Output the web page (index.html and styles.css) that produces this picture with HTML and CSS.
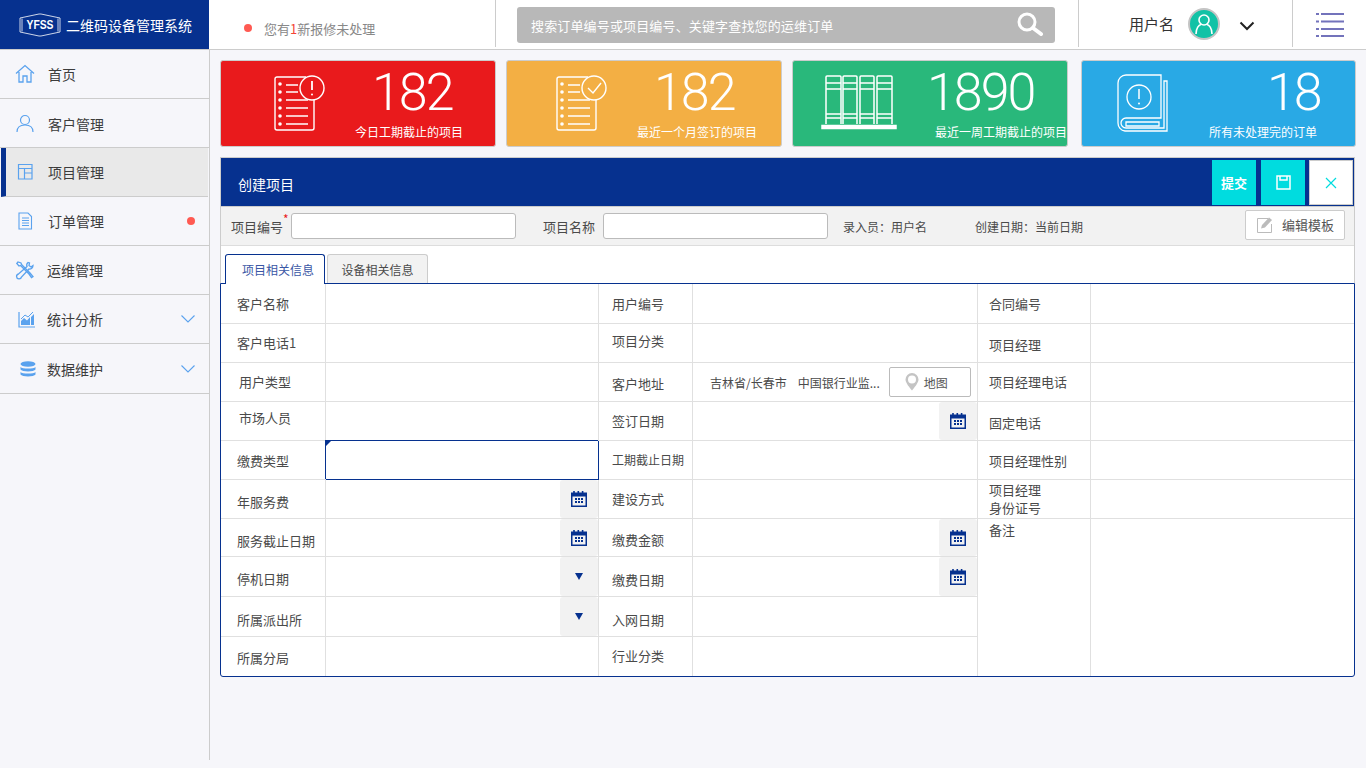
FILE: index.html
```html
<!DOCTYPE html>
<html lang="zh-CN">
<head>
    <meta charset="UTF-8">
    <title>二维码设备管理系统</title>
    <link rel="stylesheet" href="styles.css">
</head>
<body>
    <svg class="defs" width="0" height="0">
        <symbol id="cal" viewBox="0 0 16 16">
            <path fill="#06318f" fill-rule="evenodd" d="M0 1.500h2.200V0h1.600v1.500h2.700V0h1.600v1.500h2.700V0h1.600v1.500H16V16H0zM1.500 5.500v9h13v-9z"/>
            <path fill="#06318f" d="M4 7h2v2H4zM7 7h2v2H7zM10 7h2v2h-2zM4 10h2v2H4zM7 10h2v2H7zM10 10h2v2h-2z"/>
        </symbol>
    </svg>

    <header class="topbar">
        <div class="brand">
            <svg class="brand-logo" width="42" height="24" viewBox="0 0 42 24">
                <path fill="none" stroke="#fff" stroke-width=".8" d="M1 5 20 1 22 1 41 5V19L22 23H20L1 19Z"/>
                <path fill="none" stroke="#fff" stroke-width=".8" d="M3 5.500V18.500M39 5.500V18.500"/>
                <text x="21" y="16" text-anchor="middle" font-family="Liberation Sans" font-weight="bold" font-size="12" textLength="27" lengthAdjust="spacingAndGlyphs" fill="#fff">YFSS</text>
            </svg>
            <span>二维码设备管理系统</span>
        </div>
        <div class="notice"><i class="dot"></i><span>您有<b>1</b>新报修未处理</span></div>
        <div class="search-wrap">
            <div class="search">
                <span>搜索订单编号或项目编号、关键字查找您的运维订单</span>
                <svg width="28" height="24" viewBox="0 0 28 24"><circle cx="11" cy="10" r="8" fill="none" stroke="#fff" stroke-width="3"/><path d="M17 16l8 6" stroke="#fff" stroke-width="4" stroke-linecap="round"/></svg>
            </div>
        </div>
        <div class="user">
            <span>用户名</span>
            <svg class="avatar" width="32" height="32" viewBox="0 0 32 32">
                <circle cx="16" cy="16" r="15" fill="#12c2a6" stroke="#c4c4c4" stroke-width="2"/>
                <circle cx="16" cy="12" r="5" fill="none" stroke="#fff" stroke-width="1.600"/>
                <path d="M8 26c0-6 3-9 5-9.500M24 26c0-6-3-9-5-9.500" fill="none" stroke="#fff" stroke-width="1.600"/>
            </svg>
            <svg class="caret" width="16" height="10" viewBox="0 0 16 10"><path d="M1.500 1.500 8 8l6.500-6.500" fill="none" stroke="#222" stroke-width="2"/></svg>
        </div>
        <div class="menu-btn">
            <svg width="28" height="24" viewBox="0 0 28 24">
                <path stroke="#7373bb" stroke-width="2" d="M0 1h3M5 1h23M0 8.500h3M5 8.500h23M0 16h3M5 16h23M0 23h3M5 23h23"/>
            </svg>
        </div>
    </header>

    <div class="layout">
        <nav class="sidebar">
            <a class="nav-item">
                <svg width="20" height="20" viewBox="0 0 20 20"><path d="M1 9.500 10 1.500l9 8M4 8v10h4v-6h4v6h4V8" fill="none" stroke="#5aa2ee" stroke-width="1.300"/></svg>
                <span>首页</span>
            </a>
            <a class="nav-item low">
                <svg width="20" height="20" viewBox="0 0 20 20"><circle cx="10" cy="6" r="4.500" fill="none" stroke="#5aa2ee" stroke-width="1.200"/><path d="M2 18c0-4.500 3-7 8-7s8 2.500 8 7" fill="none" stroke="#5aa2ee" stroke-width="1.200"/></svg>
                <span>客户管理</span>
            </a>
            <a class="nav-item active">
                <svg width="20" height="20" viewBox="0 0 20 20"><path d="M3.500 2.500h13.500v14.500H3.500zM3.500 6.500h13.500M9.500 6.500V17M9.500 11h7.500" fill="none" stroke="#5aa2ee" stroke-width="1.200"/></svg>
                <span>项目管理</span>
            </a>
            <a class="nav-item">
                <svg width="20" height="20" viewBox="0 0 20 20"><path d="M4 2h9l3.500 3.500V18H4zM7 7h7M7 9.500h7M7 12h7M7 14.500h7" fill="none" stroke="#5aa2ee" stroke-width="1.100"/></svg>
                <span>订单管理</span>
                <i class="dot nav-dot"></i>
            </a>
            <a class="nav-item shift">
                <svg width="20" height="20" viewBox="0 0 20 20" fill="none" stroke="#5aa2ee" stroke-width="1.300">
                    <path d="M3 2 1.800 3.500 4 6l1.500-.5L14 14l2.500 3.500 1.500-1-3-3.500-8.500-8.500L6 3z"/>
                    <path d="M13 2.500a3.500 3.500 0 0 0-1 4L3.500 14a2.500 2.500 0 1 0 3 3l7.500-8a3.500 3.500 0 0 0 4-3.500l-2 1.500-2-1.500.5-2.500z"/>
                </svg>
                <span>运维管理</span>
            </a>
            <a class="nav-item shift">
                <svg width="20" height="20" viewBox="-2 0 20 20" overflow="visible"><path d="M2 3v15h16" fill="none" stroke="#5aa2ee" stroke-width="1.200"/><path d="M4 16v-4l3-3 3 2.500 3-3.500v8zM14 16V8l3-3v11z" fill="#5aa2ee"/><path d="M4 10l4-4 3 2 5-5" fill="none" stroke="#5aa2ee"/></svg>
                <span>统计分析</span>
                <svg class="nav-arrow" width="14" height="8" viewBox="0 0 14 8"><path d="M.5.500 7 7 13.500.500" fill="none" stroke="#5aa2ee" stroke-width="1.100"/></svg>
            </a>
            <a class="nav-item shift last">
                <svg width="20" height="20" viewBox="-2 0 20 20" overflow="visible"><ellipse cx="11" cy="5" rx="7.500" ry="2.800" fill="#5aa2ee"/><path d="M3.500 8c1.500 2 13.500 2 15 0v2.500c-1.500 2.500-13.500 2.500-15 0zM3.500 13c1.500 2 13.500 2 15 0v2.500c-1.500 2.500-13.500 2.500-15 0z" fill="#5aa2ee"/></svg>
                <span>数据维护</span>
                <svg class="nav-arrow" width="14" height="8" viewBox="0 0 14 8"><path d="M.5.500 7 7 13.500.500" fill="none" stroke="#5aa2ee" stroke-width="1.100"/></svg>
            </a>
        </nav>

        <main class="content">
            <section class="cards">
                <div class="card red">
                    <svg class="card-icon" width="52" height="58" viewBox="0 0 52 58" fill="none" stroke="#fff" stroke-width="1.400">
                        <path d="M32 3H3a2 2 0 0 0-2 2v49a2 2 0 0 0 2 2h35a2 2 0 0 0 2-2V26"/>
                        <circle cx="38" cy="14" r="12"/>
                        <path d="M38 7v9" stroke-width="1.800"/><circle cx="38" cy="20.500" r="1" fill="#fff" stroke="none"/>
                        <path d="M12 11h12M12 18h12M12 26h22M12 34h22M12 42h22M12 50h22"/>
                        <g fill="#fff" stroke="none"><circle cx="6" cy="10" r="1.800"/><circle cx="6" cy="18" r="1.800"/><circle cx="6" cy="26" r="1.800"/><circle cx="6" cy="34" r="1.800"/><circle cx="6" cy="42" r="1.800"/><circle cx="6" cy="50" r="1.800"/></g>
                    </svg>
                    <div class="stat">
                        <div class="num">182</div>
                        <div class="lab">今日工期截止的项目</div>
                    </div>
                </div>
                <div class="card orange">
                    <svg class="card-icon" width="52" height="58" viewBox="0 0 52 58" fill="none" stroke="#fff" stroke-width="1.400">
                        <path d="M32 3H3a2 2 0 0 0-2 2v49a2 2 0 0 0 2 2h35a2 2 0 0 0 2-2V26"/>
                        <circle cx="38" cy="14" r="12"/>
                        <path d="M32 14l5 5 8-10"/>
                        <path d="M12 11h12M12 18h12M12 26h22M12 34h22M12 42h22M12 50h22"/>
                        <g fill="#fff" stroke="none"><circle cx="6" cy="10" r="1.800"/><circle cx="6" cy="18" r="1.800"/><circle cx="6" cy="26" r="1.800"/><circle cx="6" cy="34" r="1.800"/><circle cx="6" cy="42" r="1.800"/><circle cx="6" cy="50" r="1.800"/></g>
                    </svg>
                    <div class="stat">
                        <div class="num">182</div>
                        <div class="lab">最近一个月签订的项目</div>
                    </div>
                </div>
                <div class="card green">
                    <svg class="card-icon" width="76" height="56" viewBox="0 0 76 56" fill="none" stroke="#fff" stroke-width="1.500">
                        <path d="M5 50V3a1 1 0 0 1 1-1h13a1 1 0 0 1 1 1v47M22 50V3a1 1 0 0 1 1-1h12a1 1 0 0 1 1 1v47M39 50V3a1 1 0 0 1 1-1h12a1 1 0 0 1 1 1v47M56 50V3a1 1 0 0 1 1-1h13a1 1 0 0 1 1 1v47"/>
                        <path d="M5 9h15M22 9h14M39 9h14M56 9h15M5 15h15M22 15h14M39 15h14M56 15h15M5 40h15M22 40h14M39 40h14M56 40h15M5 44h15M22 44h14M39 44h14M56 44h15"/>
                        <path d="M1 51.500h74v3H1z" fill="#fff"/>
                    </svg>
                    <div class="stat">
                        <div class="num">1890</div>
                        <div class="lab">最近一周工期截止的项目</div>
                    </div>
                </div>
                <div class="card blue">
                    <svg class="card-icon" width="54" height="58" viewBox="0 0 54 58" fill="none" stroke="#fff" stroke-width="1.300">
                        <path d="M44 1H9a8 8 0 0 0-8 8v40a8 8 0 0 0 7 8h42V7h-3v47H9a5 5 0 0 1 0-10h35z"/>
                        <path d="M9 48h33v4H9z"/>
                        <circle cx="22" cy="23" r="12"/>
                        <path d="M22 15v10" stroke-width="1.500"/><circle cx="22" cy="29.500" r="1" fill="#fff" stroke="none"/>
                    </svg>
                    <div class="stat">
                        <div class="num">18</div>
                        <div class="lab">所有未处理完的订单</div>
                    </div>
                </div>
            </section>

            <section class="panel">
                <div class="panel-top">
                    <div class="panel-head">
                        <h2>创建项目</h2>
                        <div class="head-btns">
                            <button class="btn-cyan">提交</button>
                            <button class="btn-cyan">
                                <svg width="15" height="15" viewBox="0 0 15 15"><path d="M1 1h13v13H1zM4 1v4h7V1" fill="none" stroke="#fff" stroke-width="1.500"/></svg>
                            </button>
                            <button class="btn-close">
                                <svg width="12" height="12" viewBox="0 0 12 12"><path d="M1 1l10 10M11 1 1 11" stroke="#00dcdf" stroke-width="1.200"/></svg>
                            </button>
                        </div>
                    </div>
                    <div class="toolbar">
                        <label class="tool-label">项目编号<sup>*</sup></label>
                        <input class="tool-input" type="text">
                        <label class="tool-label second">项目名称</label>
                        <input class="tool-input" type="text">
                        <span class="tool-note first">录入员：用户名</span>
                        <span class="tool-note">创建日期：当前日期</span>
                        <button class="tpl-btn">
                            <svg width="18" height="18" viewBox="0 0 18 18"><path d="M12 2.500H1.500v14h14V8" fill="none" stroke="#bbb" stroke-width="1"/><path d="M6 9l7-7.500 3 2.500-7 7.500-4 1z" fill="#bbb"/></svg>
                            编辑模板
                        </button>
                    </div>
                    <div class="tabs">
                        <a class="tab on">项目相关信息</a>
                        <a class="tab">设备相关信息</a>
                    </div>
                </div>

                <div class="form-grid">
                    <div class="lb flat">客户名称</div><div class="val"></div>
                    <div class="lb c3 flat">用户编号</div><div class="val"></div>
                    <div class="lb c5 flat">合同编号</div><div class="val end"></div>

                    <div class="lb">客户电话1</div><div class="val"></div>
                    <div class="lb c3 up">项目分类</div><div class="val"></div>
                    <div class="lb c5 dn2">项目经理</div><div class="val end"></div>

                    <div class="lb in2">用户类型</div><div class="val"></div>
                    <div class="lb c3 dn2">客户地址</div>
                    <div class="val addr">
                        <span>吉林省/长春市</span><span>中国银行业监...</span>
                        <button class="map-btn">
                            <svg width="14" height="18" viewBox="0 0 14 18"><path fill="#c4c4c4" fill-rule="evenodd" d="M7 0a6.500 6.500 0 0 1 6.500 6.500C13.500 10 9 15 7 17.500 5 15 .5 10 .5 6.500A6.500 6.500 0 0 1 7 0zm0 2.500a4 4 0 1 0 0 8 4 4 0 0 0 0-8z"/></svg>
                            地图
                        </button>
                    </div>
                    <div class="lb c5">项目经理电话</div><div class="val end"></div>

                    <div class="lb in2 up2">市场人员</div><div class="val"></div>
                    <div class="lb c3">签订日期</div>
                    <div class="val"><span class="addon"><svg width="16" height="16"><use href="#cal"/></svg></span></div>
                    <div class="lb c5 dn2">固定电话</div><div class="val end"></div>

                    <div class="lb flat">缴费类型</div><div class="val focus"></div>
                    <div class="lb c3 small">工期截止日期</div><div class="val"></div>
                    <div class="lb c5 flat">项目经理性别</div><div class="val end"></div>

                    <div class="lb dn3">年服务费</div>
                    <div class="val"><span class="addon"><svg width="16" height="16"><use href="#cal"/></svg></span></div>
                    <div class="lb c3">建设方式</div><div class="val"></div>
                    <div class="lb c5 two">项目经理<br>身份证号</div><div class="val end"></div>

                    <div class="lb dn4">服务截止日期</div>
                    <div class="val"><span class="addon"><svg width="16" height="16"><use href="#cal"/></svg></span></div>
                    <div class="lb c3 dn3">缴费金额</div>
                    <div class="val"><span class="addon"><svg width="16" height="16"><use href="#cal"/></svg></span></div>
                    <div class="lb c5 remark">备注</div><div class="val end remark-val"></div>

                    <div class="lb dn3">停机日期</div>
                    <div class="val"><span class="addon"><i class="tri"></i></span></div>
                    <div class="lb c3 dn4">缴费日期</div>
                    <div class="val"><span class="addon"><svg width="16" height="16"><use href="#cal"/></svg></span></div>

                    <div class="lb dn4">所属派出所</div>
                    <div class="val"><span class="addon"><i class="tri"></i></span></div>
                    <div class="lb c3 dn4">入网日期</div><div class="val"></div>

                    <div class="lb dn2 nob">所属分局</div><div class="val nob"></div>
                    <div class="lb c3 nob">行业分类</div><div class="val nob"></div>
                </div>
            </section>
        </main>
    </div>
</body>
</html>
```

FILE: styles.css
```css
*{
    box-sizing: border-box;
}
html,body{
    height: 100%;
}
body{
    margin: 0;
    overflow: hidden;
    background-color: #f6f6fa;
    font-family: "Noto Sans CJK SC", "Liberation Sans", sans-serif;
    font-size: 13px;
    color: #4a4a4a;
}
.defs{
    position: absolute;
}
.dot{
    display: block;
    width: 8px;
    height: 8px;
    border-radius: 50%;
    background-color: #ff5a52;
}

/* top bar */
.topbar{
    display: flex;
    height: 50px;
    background-color: #fff;
    border-bottom: 1px solid #ccc;
}
.brand{
    display: flex;
    align-items: center;
    width: 209px;
    padding-left: 19px;
    background-color: #06318f;
    color: #fff;
    font-size: 14px;
}
.brand-logo{
    margin-right: 5px;
    flex: none;
}
.notice{
    display: flex;
    align-items: center;
    width: 287px;
    height: 47px;
    padding: 10px 0 0 35px;
    border-right: 1px solid #ccc;
    color: #888;
}
.notice .dot{
    margin: -2px 12px 0 0;
}
.notice b{
    color: #f44336;
    font-weight: normal;
}
.search-wrap{
    width: 583px;
    height: 47px;
    padding: 7px 0 0 21px;
    border-right: 1px solid #ccc;
}
.search{
    display: flex;
    justify-content: space-between;
    align-items: center;
    width: 538px;
    height: 36px;
    padding: 0 11px 0 14px;
    border-radius: 3px;
    background-color: #b8b8b8;
    color: #fff;
    letter-spacing: .15px;
}
.search svg{
    margin-top: -3px;
}
.user{
    display: flex;
    align-items: center;
    width: 214px;
    height: 47px;
    padding-left: 50px;
    border-right: 1px solid #ccc;
    font-size: 15px;
    color: #333;
}
.avatar{
    margin-left: 14px;
}
.caret{
    margin: 4px 0 0 19px;
}
.menu-btn{
    padding: 13px 0 0 23px;
}

/* sidebar */
.layout{
    display: flex;
    height: 710px;
}
.sidebar{
    flex: none;
    width: 210px;
    border-right: 1px solid #ccc;
}
.nav-item{
    display: flex;
    align-items: center;
    height: 49px;
    padding-left: 15px;
    border-bottom: 1px solid #ccc;
    font-size: 14px;
    color: #3c3c3c;
}
.nav-item svg:first-child{
    flex: none;
    margin-right: 13px;
}
.nav-item.low{
    padding-top: 2px;
}
.nav-item.active{
    margin: 0 1px 0 1px;
    padding-left: 9px;
    background-color: #e9e9e9;
    border-left: 5px solid #06318f;
}
.nav-item.shift svg:first-child{
    margin-right: 12px;
}
.nav-item.last{
    height: 50px;
}
.nav-dot,.nav-arrow{
    margin-left: auto;
    margin-right: 14px;
}

/* stat cards */
.content{
    flex: 1;
    padding: 10px 11px 0 10px;
}
.cards{
    display: flex;
    gap: 10px;
}
.card{
    display: flex;
    width: 276px;
    height: 87px;
    border: 1px solid #ccc;
    border-radius: 3px;
    color: #fff;
}
.card-icon{
    flex: none;
    margin-top: 13px;
}
.num{
    height: 50px;
    margin-top: 7px;
    font-family: Roboto, sans-serif;
    font-weight: 300;
    font-size: 52px;
    line-height: 50px;
    letter-spacing: -2px;
}
.lab{
    margin-top: 5px;
    font-size: 12px;
    line-height: 18px;
    white-space: nowrap;
}
.red{
    background-color: #e91a1c;
}
.red .card-icon{
    margin-left: 53px;
}
.red .stat{
    margin-left: 29px;
}
.red .num{
    margin-left: 17px;
}
.orange{
    background-color: #f3af44;
}
.orange .card-icon{
    margin-left: 49px;
}
.orange .stat{
    margin-left: 29px;
}
.orange .num{
    margin-left: 17px;
}
.green{
    background-color: #29b87b;
}
.green .card-icon{
    margin-left: 28px;
}
.green .stat{
    margin-left: 38px;
}
.green .num{
    margin-left: -8px;
}
.blue{
    width: 275px;
    margin-left: 3px;
    background-color: #29a9e5;
}
.blue .card-icon{
    margin-left: 35px;
}
.blue .stat{
    margin-left: 38px;
}
.blue .num{
    margin-left: 58px;
}

/* form panel */
.panel{
    width: 1135px;
    margin-top: 10px;
}
.panel-top{
    border: 1px solid #ccc;
    border-bottom: none;
}
.panel-head{
    display: flex;
    justify-content: space-between;
    align-items: flex-end;
    height: 49px;
    background-color: #06318f;
    border-bottom: 1px solid #ccc;
}
.panel-head h2{
    margin: 0 0 12px 17px;
    font-size: 14px;
    font-weight: normal;
    color: #fff;
}
.head-btns{
    display: flex;
    gap: 5px;
    padding: 0 1px 1px 0;
}
.head-btns button{
    display: flex;
    justify-content: center;
    align-items: center;
    width: 44px;
    height: 45px;
    padding: 0;
    border: none;
}
.btn-cyan{
    background-color: #00dcdf;
    color: #fff;
    font: bold 13px "Noto Sans CJK SC", sans-serif;
}
.head-btns .btn-close{
    margin-left: -1px;
    background-color: #fff;
    border: 1px solid #ccc;
}
.toolbar{
    display: flex;
    align-items: center;
    height: 39px;
    padding: 0 9px 0 10px;
    background-color: #f2f2f2;
    border-bottom: 1px solid #ddd;
}
.tool-label{
    position: relative;
    width: 60px;
    white-space: nowrap;
}
.tool-label sup{
    position: absolute;
    top: -7px;
    left: 52px;
    font-size: 12px;
    color: #e91a1c;
}
.tool-label.second{
    margin-left: 27px;
}
.tool-input{
    width: 225px;
    height: 26px;
    border: 1px solid #bbb;
    border-radius: 3px;
    background-color: #fff;
}
.tool-note{
    margin-left: 48px;
    font-size: 12px;
}
.tool-note.first{
    margin-left: 15px;
}
.tpl-btn{
    display: flex;
    align-items: center;
    gap: 8px;
    width: 100px;
    height: 30px;
    margin: -3px 0 0 auto;
    padding: 0 0 0 10px;
    border: 1px solid #ccc;
    border-radius: 2px;
    background-color: #fff;
    color: #555;
    font: 13px "Noto Sans CJK SC", sans-serif;
}
.tabs{
    display: flex;
    gap: 2px;
    height: 37px;
    padding: 8px 0 0 4px;
    background-color: #fff;
}
.tab{
    flex: none;
    width: 101px;
    height: 29px;
    padding-top: 7px;
    border: 1px solid #ccc;
    border-bottom: none;
    border-radius: 3px 3px 0 0;
    background-color: #f2f2f2;
    font-size: 12px;
    line-height: 16px;
    text-align: center;
}
.tab.on{
    position: relative;
    z-index: 1;
    width: 100px;
    height: 30px;
    padding-left: 6px;
    border-color: #06318f;
    background-color: #fff;
    color: #3a57a5;
}

/* form table */
.form-grid{
    display: grid;
    grid-template-columns: 105px 273px 94px 285px 113px 263px;
    grid-template-rows: 40px 39px 39px 39px 39px 39px 38px 40px 40px 39px;
    width: 1135px;
    border: 1px solid #06318f;
    border-radius: 0 0 3px 3px;
    background-color: #fff;
}
.lb,.val{
    border-right: 1px solid #e0e0e0;
    border-bottom: 1px solid #e0e0e0;
}
.lb{
    display: flex;
    align-items: center;
    padding-left: 16px;
    padding-bottom: 2px;
    white-space: nowrap;
}
.lb.c3{
    padding-left: 13px;
}
.lb.c5{
    padding-left: 11px;
}
.lb.in2{
    padding-left: 18px;
}
.lb.small{
    font-size: 12px;
}
.lb.flat{
    padding-bottom: 0;
}
.lb.up{
    padding-bottom: 6px;
}
.lb.up2{
    padding-bottom: 8px;
}
.lb.dn2{
    padding-top: 4px;
}
.lb.dn3{
    padding-top: 6px;
}
.lb.dn4{
    padding-top: 8px;
}
.lb.two{
    line-height: 18px;
    padding-top: 1px;
}
.val{
    display: flex;
    justify-content: flex-end;
    position: relative;
}
.val.end{
    border-right: none;
}
.nob{
    border-bottom: none;
}
.lb.remark{
    grid-column: 5;
    grid-row: 7 / span 4;
    align-items: flex-start;
    padding-top: 1px;
    border-bottom: none;
}
.remark-val{
    grid-column: 6;
    grid-row: 7 / span 4;
    border-bottom: none;
}
.focus{
    border-right-color: #06318f;
    border-bottom-color: #06318f;
    box-shadow: -1px -1px 0 #06318f;
}
.focus::before{
    content: "";
    position: absolute;
    top: 0;
    left: 0;
    border-top: 5px solid #06318f;
    border-right: 5px solid transparent;
}
.addon{
    display: flex;
    justify-content: center;
    align-items: center;
    width: 38px;
    border-radius: 3px;
    background-color: #f2f2f2;
}
.tri{
    display: block;
    border-top: 7px solid #06318f;
    border-left: 4px solid transparent;
    border-right: 4px solid transparent;
}
.addr{
    justify-content: flex-start;
    align-items: center;
    padding-left: 17px;
    font-size: 12px;
}
.addr span + span{
    margin-left: 11px;
}
.map-btn{
    display: flex;
    align-items: center;
    gap: 5px;
    width: 82px;
    height: 30px;
    margin-left: 9px;
    padding: 0 0 0 15px;
    border: 1px solid #bbb;
    border-radius: 2px;
    background-color: #fff;
    color: #555;
    font: 12px "Noto Sans CJK SC", sans-serif;
}
```
